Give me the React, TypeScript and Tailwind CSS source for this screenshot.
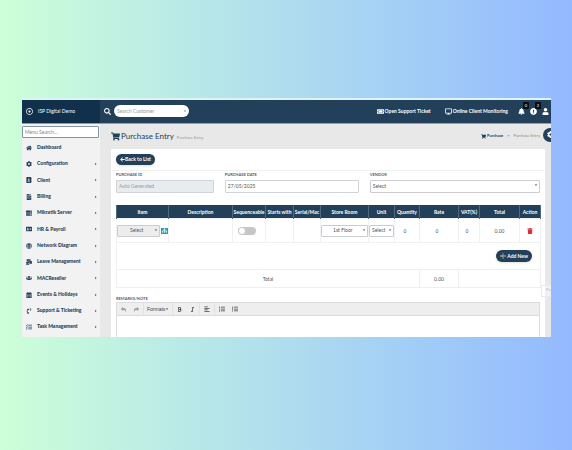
import type { ReactNode } from "react";
import type { IconType } from "react-icons";
import {
    FaHome, FaCog, FaServer, FaAddressCard, FaGlobe, FaUsers, FaCalendarAlt, FaTasks, FaSearch,
    FaShoppingCart, FaArrowLeft, FaTicketAlt, FaBell, FaUser, FaReply, FaShare, FaBold, FaItalic,
    FaAlignLeft, FaListUl, FaListOl, FaCaretDown, FaCaretRight, FaTrash, FaSitemap,
    FaAddressBook, FaFileInvoice, FaMailBulk, FaPhoneVolume, FaDesktop, FaRegDotCircle, FaExclamationCircle,
} from "react-icons/fa";

interface MenuItem {
    name: string;
    icon: IconType;
    leaf?: boolean;
}

const menu: MenuItem[] = [
    { name: "Dashboard", icon: FaHome, leaf: true },
    { name: "Configuration", icon: FaCog },
    { name: "Client", icon: FaAddressBook },
    { name: "Billing", icon: FaFileInvoice },
    { name: "Mikratik Server", icon: FaServer },
    { name: "HR & Payroll", icon: FaAddressCard },
    { name: "Network Diagram", icon: FaGlobe },
    { name: "Leave Management", icon: FaMailBulk },
    { name: "MACReseller", icon: FaUsers },
    { name: "Events & Holidays", icon: FaCalendarAlt },
    { name: "Support & Ticketing", icon: FaPhoneVolume },
    { name: "Task Management", icon: FaTasks },
];

const columns = [
    { title: "Item", width: "w-[52px]" },
    { title: "Description", width: "w-[64px]" },
    { title: "Sequenceable", width: "w-[33px]" },
    { title: "Starts with", width: "w-[28px]" },
    { title: "Serial/Mac", width: "w-[27px]" },
    { title: "Store Room", width: "w-[48px]" },
    { title: "Unit", width: "w-[26px]" },
    { title: "Quantity", width: "w-[25px]" },
    { title: "Rate", width: "w-[39px]" },
    { title: "VAT(%)", width: "w-[21px]" },
    { title: "Total", width: "w-[40px]" },
    { title: "Action", width: "w-[21px]" },
];

interface SelectBoxProps {
    id?: string;
    label?: string;
    value: string;
    className: string;
}

const SelectBox = ({ id, label, value, className }: SelectBoxProps) => {
    return (
        <div className="relative min-w-0 flex-1">
            <select
                id={id}
                aria-label={label}
                className={`block w-full appearance-none rounded-[1px] border border-[#c9cdd1] text-[5px] leading-none text-[#555] ${className}`}
            >
                <option>{value}</option>
            </select>
            <FaCaretDown className="pointer-events-none absolute top-[3px] right-0.5 size-[4px] text-[#444]" />
        </div>
    );
};

const Field = ({ id, label, className, children }: { id: string; label: string; className: string; children: ReactNode }) => {
    return (
        <div className={`flex flex-col gap-0.5 pt-px ${className}`}>
            <label htmlFor={id} className="text-[4px] leading-[6px] font-bold text-[#4d6073] uppercase">{label}</label>
            {children}
        </div>
    );
};

const Badge = ({ count }: { count: number }) => {
    return (
        <span className="absolute -top-1.5 -right-1 w-1.5 rounded-[1px] bg-[#0b0f14] text-center text-[4px] leading-[7px]">{count}</span>
    );
};

const TopBar = () => {
    return (
        <header className="flex h-6 shrink-0 items-stretch border-b border-[#8fa0ae] bg-[#22405a] text-white">
            <div className="flex w-[78px] shrink-0 items-center gap-[5px] bg-[#11304c] pl-1">
                <FaRegDotCircle className="size-[7px]" />
                <span className="text-[5px]">ISP Digital Demo</span>
            </div>
            <div className="flex items-center gap-[3px] pl-1">
                <FaSearch className="size-[7px]" />
                <div className="relative">
                    <input
                        aria-label="Search Customer"
                        placeholder="Search Customer"
                        className="block h-3 w-[75px] rounded-full bg-white pl-[3px] text-[5px] text-gray-700 placeholder:text-[#999]"
                    />
                    <FaCaretDown className="absolute top-1 right-0.5 size-[4px] text-[#777]" />
                </div>
            </div>
            <nav className="ml-auto flex items-center gap-3.5 text-[5px] font-bold">
                <a href="#ticket" className="flex items-center gap-px">
                    <FaTicketAlt className="size-[7px]" />
                    Open Support Ticket
                </a>
                <a href="#monitoring" className="flex items-center gap-px">
                    <FaDesktop className="size-[7px]" />
                    Online Client Monitoring
                </a>
            </nav>
            <div className="flex items-center gap-[5px] pt-px pr-0.5 pl-2.5">
                <button aria-label="Notifications" className="relative">
                    <FaBell className="size-[7px]" />
                    <Badge count={0} />
                </button>
                <button aria-label="Alerts" className="relative">
                    <FaExclamationCircle className="size-[7px]" />
                    <Badge count={2} />
                </button>
                <button aria-label="Profile">
                    <FaUser className="size-[7px]" />
                </button>
            </div>
        </header>
    );
};

const Sidebar = () => {
    return (
        <aside className="flex w-[78px] shrink-0 flex-col bg-[#f2f2f2] pt-0.5 pb-0.5 shadow">
            <input
                aria-label="Menu Search"
                placeholder="Menu Search..."
                className="mr-px h-3 rounded-[1px] border border-[#8496a6] bg-white px-0.5 text-[5px] placeholder:text-[#888]"
            />
            <ul className="flex flex-1 flex-col pt-0.5">
                {menu.map(({ name, icon: Icon, leaf }) => (
                    <li key={name} className="flex flex-1">
                        <a href="#menu" className="flex flex-1 items-center pr-0.5 pl-1 text-[5px] font-black text-[#22405a]">
                            <Icon className="mr-[5px] size-[6px]" />
                            {name}
                            {!leaf && <FaCaretRight className="ml-auto size-[4px]" />}
                        </a>
                    </li>
                ))}
            </ul>
        </aside>
    );
};

const ColorPlus = () => {
    return (
        <svg viewBox="0 0 12 12" className="size-[6px]" strokeWidth="2" aria-hidden="true">
            <path d="M6 0v6" stroke="#f0705a" />
            <path d="M6 6h6" stroke="#8fb8e8" />
            <path d="M6 6v6" stroke="#4fc08d" />
            <path d="M0 6h6" stroke="#f3c667" />
        </svg>
    );
};

const ItemsTable = () => {
    return (
        <table className="mt-3 w-full table-fixed border-collapse text-center text-[5px] leading-[6px] text-[#555]">
            <colgroup>
                {columns.map((col) => <col key={col.title} className={col.width} />)}
            </colgroup>
            <thead>
                <tr className="h-3.5 bg-[#22405a] text-white">
                    {columns.map((col) => (
                        <th key={col.title} className="border-x border-[#51697d] font-bold whitespace-nowrap">{col.title}</th>
                    ))}
                </tr>
            </thead>
            <tbody>
                <tr className="h-6 *:border *:border-[#f1f1f1]">
                    <td>
                        <div className="flex items-center gap-px">
                            <SelectBox label="Item" value="Select" className="h-3 bg-[#ededed] pl-3" />
                            <button aria-label="Item tree" className="flex h-1.5 w-[7px] items-center justify-center bg-[#279fae] text-white">
                                <FaSitemap className="size-[5px]" />
                            </button>
                        </div>
                    </td>
                    <td></td>
                    <td className="pr-1">
                        <label className="inline-flex align-middle">
                            <input type="checkbox" aria-label="Sequenceable" className="peer sr-only" />
                            <span className="flex h-2 w-[18px] items-center rounded-full bg-[#c6c6c6] px-px peer-checked:justify-end">
                                <span className="size-1.5 rounded-full bg-white"></span>
                            </span>
                        </label>
                    </td>
                    <td></td>
                    <td></td>
                    <td>
                        <SelectBox label="Store room" value="1st Floor" className="h-3 bg-white pl-[11px]" />
                    </td>
                    <td>
                        <SelectBox label="Unit" value="Select" className="h-3 bg-white pl-0.5" />
                    </td>
                    <td className="pr-1">0</td>
                    <td className="pr-1">0</td>
                    <td className="pr-1">0</td>
                    <td>0.00</td>
                    <td>
                        <button aria-label="Delete row" className="block w-full">
                            <FaTrash className="mx-auto size-[6px] text-[#dc2f3c]" />
                        </button>
                    </td>
                </tr>
                <tr className="h-[27px] border border-[#f1f1f1]">
                    <td colSpan={12} className="pr-2">
                        <button className="ml-auto flex h-3 items-center gap-px rounded-full bg-[#22405a] px-1 font-bold text-white shadow">
                            <ColorPlus />
                            Add New
                        </button>
                    </td>
                </tr>
                <tr className="h-[18px] *:border *:border-[#efefef]">
                    <td colSpan={8}>Total</td>
                    <td>0.00</td>
                    <td colSpan={3}></td>
                </tr>
            </tbody>
        </table>
    );
};

const Editor = () => {
    return (
        <div className="border border-b-0 border-[#dcdcdc]">
            <div className="flex h-[13px] items-stretch divide-x divide-[#e0e0e0] border-b border-[#dcdcdc] bg-[#eee] text-[#444]">
                <div className="flex items-center gap-2 px-1 text-[#999]">
                    <button aria-label="Undo"><FaReply className="size-[5px]" /></button>
                    <button aria-label="Redo"><FaShare className="size-[5px]" /></button>
                </div>
                <button className="flex items-center px-[3px] font-['Liberation_Sans',sans-serif] text-[5px]">
                    Formats
                    <FaCaretDown className="size-[4px]" />
                </button>
                <div className="flex items-center gap-2 px-1">
                    <button aria-label="Bold"><FaBold className="size-[5px]" /></button>
                    <button aria-label="Italic"><FaItalic className="size-[5px]" /></button>
                </div>
                <button aria-label="Align left" className="px-1"><FaAlignLeft className="size-[6px]" /></button>
                <div className="flex items-center gap-[7px] px-1">
                    <button aria-label="Bullet list"><FaListUl className="size-[6px]" /></button>
                    <button aria-label="Numbered list"><FaListOl className="size-[6px]" /></button>
                </div>
            </div>
            <textarea id="remarks" className="block h-[21px] w-full resize-none bg-white p-1 text-[5px]"></textarea>
        </div>
    );
};

export default function App() {
    return (
        <div className="flex min-h-screen flex-col justify-center bg-linear-to-r from-[#cdffd8] to-[#94b9ff] pr-[21px] pb-[15px] pl-[22px] font-[Lato,sans-serif]">
            <div className="flex flex-col overflow-hidden border-t-2 border-[#dff3f3]">
                <TopBar />
                <div className="flex">
                    <Sidebar />
                    <main className="relative min-w-0 flex-1 bg-[#e8e8e8] pr-1.5 pl-[11px]">
                        <div className="flex h-[25px] items-center text-[#22405a]">
                            <FaShoppingCart className="mr-px size-[9px]" />
                            <h1 className="text-[8px]">Purchase Entry</h1>
                            <span className="pt-1 pl-[3px] text-[4px] text-[#999]">Purchase Entry</span>
                            <nav aria-label="Breadcrumb" className="ml-auto flex items-center gap-px pr-[5px] text-[4px]">
                                <FaShoppingCart className="size-[5px]" />
                                <a href="#purchase" className="font-bold">Purchase</a>
                                <span className="px-[3px]">&gt;</span>
                                <span className="text-[#888]">Purchase Entry</span>
                            </nav>
                        </div>
                        <button aria-label="Settings" className="absolute top-1 -right-1.5 flex size-3.5 items-center rounded-full bg-[#22405a] pl-1 text-white">
                            <FaCog className="size-[7px]" />
                        </button>

                        <section className="rounded-t-[1px] bg-white px-[5px]">
                            <div className="-mx-[5px] flex h-[22px] items-center border-b border-[#f1f1f1] px-[5px]">
                                <a href="#list" className="flex h-[11px] items-center rounded-full bg-[#22405a] px-1 text-[5px] font-bold text-white shadow">
                                    <FaArrowLeft className="size-[5px]" />
                                    Back to List
                                </a>
                            </div>
                            <form className="grid grid-cols-12 gap-[11px]">
                                <Field id="purchase-id" label="Purchase ID" className="col-span-3">
                                    <input id="purchase-id" disabled placeholder="Auto Generated" className="h-[13px] w-full rounded-[1px] border border-[#ced4da] bg-[#e9ecef] px-0.5 text-[5px] placeholder:text-[#999]" />
                                </Field>
                                <Field id="purchase-date" label="Purchase Date" className="col-span-4">
                                    <input id="purchase-date" defaultValue="27/05/2025" className="h-[13px] w-full rounded-[1px] border border-[#ced4da] bg-white px-0.5 text-[5px] text-[#555]" />
                                </Field>
                                <Field id="vendor" label="Vendor" className="col-span-5">
                                    <SelectBox id="vendor" value="Select" className="h-[13px] bg-white pl-0.5" />
                                </Field>
                            </form>
                            <ItemsTable />
                            <label htmlFor="remarks" className="mt-[7px] block text-[4px] leading-[7px] font-bold text-[#4d6073]">REMARKS/NOTE</label>
                            <Editor />
                        </section>
                        <div className="absolute right-0 bottom-10 h-3 w-2.5 border border-r-0 border-[#e6e9ee] bg-white/40 pl-1 text-[4px] leading-[8px] text-[#a9b6cc]">
                            Pu
                        </div>
                    </main>
                </div>
            </div>
        </div>
    );
}
